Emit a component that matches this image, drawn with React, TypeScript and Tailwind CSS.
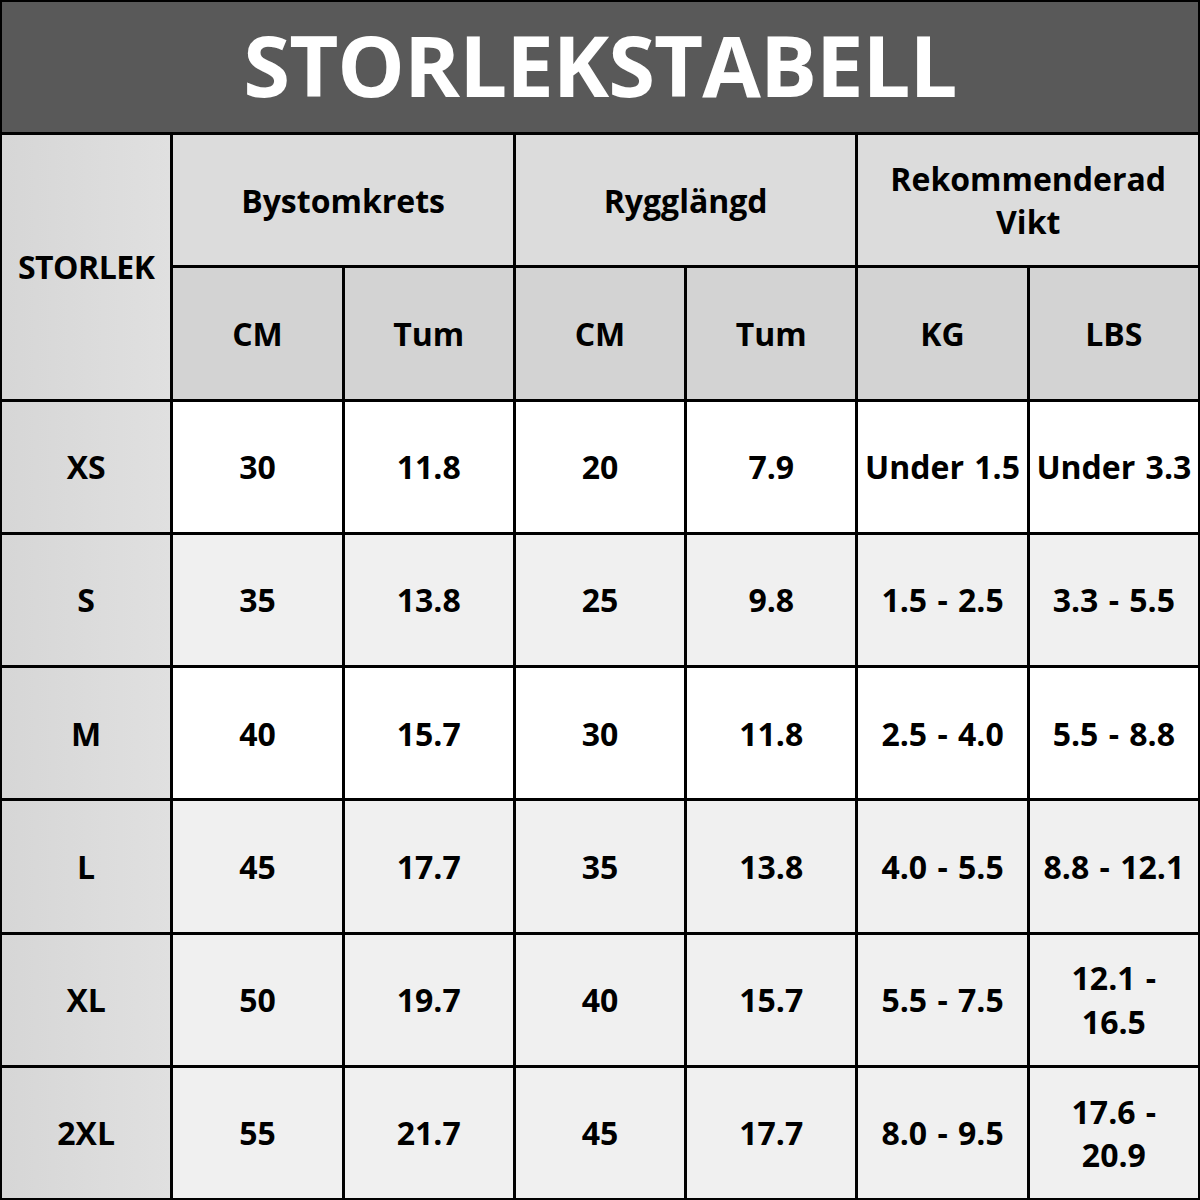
import React from 'react';

const rows = [
  { size: 'XS', bg: 'bg-white', cells: ['30', '11.8', '20', '7.9', 'Under 1.5', 'Under 3.3'] },
  { size: 'S', bg: 'bg-[#f0f0f0]', cells: ['35', '13.8', '25', '9.8', '1.5 - 2.5', '3.3 - 5.5'] },
  { size: 'M', bg: 'bg-white', cells: ['40', '15.7', '30', '11.8', '2.5 - 4.0', '5.5 - 8.8'] },
  { size: 'L', bg: 'bg-[#f0f0f0]', cells: ['45', '17.7', '35', '13.8', '4.0 - 5.5', '8.8 - 12.1'] },
  { size: 'XL', bg: 'bg-[#f0f0f0]', cells: ['50', '19.7', '40', '15.7', '5.5 - 7.5', '12.1 - 16.5'] },
  { size: '2XL', bg: 'bg-[#f0f0f0]', cells: ['55', '21.7', '45', '17.7', '8.0 - 9.5', '17.6 - 20.9'] },
];

const cell = 'flex items-center justify-center text-center leading-[1.35]';

export default function App() {
  return (
    <div
      className="w-[1200px] h-[1200px] bg-black p-[2px] grid grid-cols-7 grid-rows-9 gap-[3px] text-[32px] font-bold text-black [word-spacing:2px]"
      style={{ fontFamily: '"Open Sans", "Liberation Sans", sans-serif' }}
    >
      <div className={`${cell} col-span-7 bg-[#595959] text-white text-[85px] tracking-[-1px] pb-[6px] [word-spacing:0px]`}>
        STORLEKSTABELL
      </div>

      <div className={`${cell} row-span-2 bg-gradient-to-r from-[#d6d6d6] to-[#e0e0e0] tracking-[-0.5px]`}>STORLEK</div>
      <div className={`${cell} col-span-2 bg-[#dcdcdc]`}>Bystomkrets</div>
      <div className={`${cell} col-span-2 bg-[#dcdcdc]`}>Rygglängd</div>
      <div className={`${cell} col-span-2 bg-[#dcdcdc] px-4`}>Rekommenderad Vikt</div>

      {['CM', 'Tum', 'CM', 'Tum', 'KG', 'LBS'].map((h, i) => (
        <div key={i} className={`${cell} bg-[#d3d3d3]`}>{h}</div>
      ))}

      {rows.map((r) => (
        <React.Fragment key={r.size}>
          <div className={`${cell} bg-gradient-to-r from-[#d6d6d6] to-[#e0e0e0]`}>{r.size}</div>
          {r.cells.map((c, i) => (
            <div
              key={i}
              className={`${cell} ${r.bg} ${i === 5 && c.length > 9 && !c.startsWith('8') ? 'px-10' : 'px-0 whitespace-nowrap'}`}
            >
              {c}
            </div>
          ))}
        </React.Fragment>
      ))}
    </div>
  );
}
